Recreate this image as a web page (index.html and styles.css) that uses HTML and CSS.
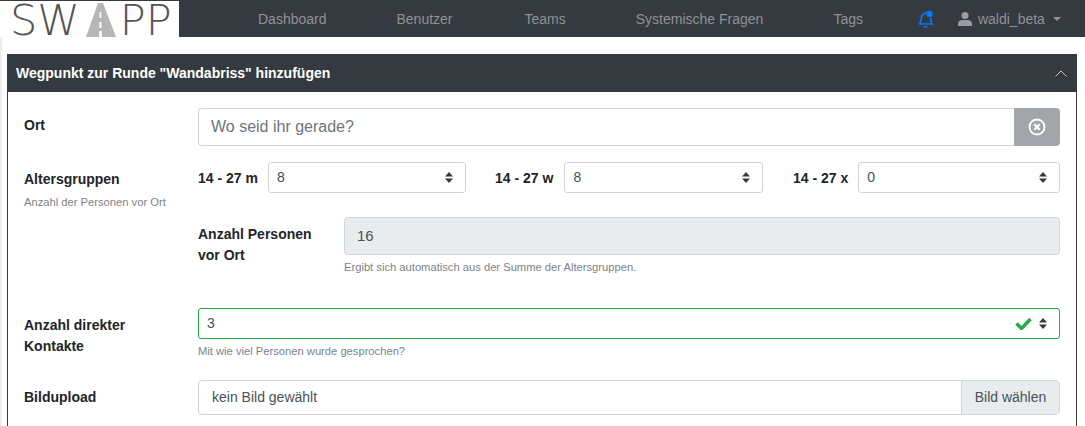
FILE: index.html
```html
<!DOCTYPE html>
<html lang="de">
<head>
    <meta charset="UTF-8">
    <title>SWAPP</title>
    <link rel="stylesheet" href="styles.css">
</head>
<body>
<nav class="navbar">
    <div class="logo">
        <span class="logo-text">SW</span>
        <svg class="logo-road" width="32" height="35" viewBox="0 0 32 35">
            <polygon points="13,1 18,1 31,35 1,35" fill="#b4b6b8"/>
            <rect x="14.6" y="10" width="1.600" height="6" fill="#fff"/>
            <rect x="14.400" y="20" width="2" height="6" fill="#fff"/>
            <rect x="14.200" y="29" width="2.600" height="6" fill="#fff"/>
        </svg>
        <span class="logo-text logo-text-pp">PP</span>
    </div>
    <div class="nav-links">
        <a class="nav-link link-dashboard">Dashboard</a>
        <a class="nav-link link-benutzer">Benutzer</a>
        <a class="nav-link link-teams">Teams</a>
        <a class="nav-link link-fragen">Systemische Fragen</a>
        <a class="nav-link link-tags">Tags</a>
    </div>
    <svg class="bell" width="16" height="18" viewBox="0 0 16 18">
        <path d="M1 14c1.500-1 2-2.500 2.300-5.500C3.700 5 5.500 3 8.500 2.500M1 14h13c-.8-.7-1-1.500-1-3V8" fill="none" stroke="#007bff" stroke-width="1.700"/>
        <circle cx="11.500" cy="4" r="3.200" fill="#007bff"/>
        <path d="M5.500 16.800h4" stroke="#007bff" stroke-width="1.500"/>
    </svg>
    <div class="user-menu">
        <svg width="14" height="14" viewBox="0 0 14 14">
            <circle cx="7" cy="3.500" r="3.500" fill="#9a9da0"/>
            <path d="M0 14v-2c0-2.500 2-4 4-4h6c2 0 4 1.500 4 4v2z" fill="#9a9da0"/>
        </svg>
        <span>waldi_beta</span>
        <span class="caret"></span>
    </div>
</nav>

<main class="page">
    <section class="card">
        <header class="card-header">
            <h1>Wegpunkt zur Runde "Wandabriss" hinzufügen</h1>
            <svg width="12" height="7" viewBox="0 0 12 7">
                <path d="M.5 6.500L6 1l5.500 5.500" fill="none" stroke="#c8cacc" stroke-width="1"/>
            </svg>
        </header>
        <div class="card-body">
            <div class="row row-ort">
                <div class="label"><b>Ort</b></div>
                <div class="input-group">
                    <div class="input input-lg">Wo seid ihr gerade?</div>
                    <div class="clear-btn">
                        <svg width="18" height="18" viewBox="0 0 18 18">
                            <circle cx="9" cy="9" r="7.500" fill="none" stroke="#fff" stroke-width="1.800"/>
                            <path d="M6.300 6.300l5.400 5.400M11.700 6.300l-5.400 5.400" stroke="#fff" stroke-width="2.200"/>
                        </svg>
                    </div>
                </div>
            </div>

            <div class="row row-alter">
                <div class="label">
                    <b>Altersgruppen</b>
                    <small>Anzahl der Personen vor Ort</small>
                </div>
                <div class="field">
                    <div class="age-groups">
                        <div class="age age-m">
                            <b>14 - 27 m</b>
                            <div class="select"><span>8</span><svg class="updown" width="8" height="11" viewBox="0 0 8 11"><path d="M4 0l4 4.400H0zM4 11L0 6.600h8z" fill="#343a40"/></svg></div>
                        </div>
                        <div class="age age-w">
                            <b>14 - 27 w</b>
                            <div class="select"><span>8</span><svg class="updown" width="8" height="11" viewBox="0 0 8 11"><path d="M4 0l4 4.400H0zM4 11L0 6.600h8z" fill="#343a40"/></svg></div>
                        </div>
                        <div class="age age-x">
                            <b>14 - 27 x</b>
                            <div class="select"><span>0</span><svg class="updown" width="8" height="11" viewBox="0 0 8 11"><path d="M4 0l4 4.400H0zM4 11L0 6.600h8z" fill="#343a40"/></svg></div>
                        </div>
                    </div>
                    <div class="sum">
                        <b class="sum-label">Anzahl Personen vor Ort</b>
                        <div class="sum-field">
                            <div class="input input-readonly">16</div>
                            <small>Ergibt sich automatisch aus der Summe der Altersgruppen.</small>
                        </div>
                    </div>
                </div>
            </div>

            <div class="row row-kontakte">
                <div class="label"><b>Anzahl direkter Kontakte</b></div>
                <div class="field">
                    <div class="select select-valid">
                        <span>3</span>
                        <svg width="17" height="13" viewBox="0 0 17 13"><path d="M1.500 6.500l5 5L15.500 2" fill="none" stroke="#28a745" stroke-width="3.400"/></svg>
                        <svg class="updown" width="8" height="11" viewBox="0 0 8 11"><path d="M4 0l4 4.400H0zM4 11L0 6.600h8z" fill="#343a40"/></svg>
                    </div>
                    <small>Mit wie viel Personen wurde gesprochen?</small>
                </div>
            </div>

            <div class="row row-upload">
                <div class="label"><b>Bildupload</b></div>
                <div class="input-group file-group">
                    <div class="file-name">kein Bild gewählt</div>
                    <div class="file-btn">Bild wählen</div>
                </div>
            </div>
        </div>
    </section>
</main>
</body>
</html>
```

FILE: styles.css
```css
* {
    box-sizing: border-box;
}
html, body {
    height: 100%;
    overflow: hidden;
}
body {
    margin: 0;
    font-family: "Liberation Sans", Arial, sans-serif;
    font-size: 14px;
    line-height: 21px;
    color: #212529;
    background: linear-gradient(to right, #e6e6e6, #fff 3px);
}
b {
    font-weight: 700;
}
small {
    display: block;
    font-size: 11.200px;
    line-height: 16px;
    color: #7b838a;
}

/* navbar */
.navbar {
    display: flex;
    align-items: flex-start;
    height: 37px;
    line-height: 38px;
    background-color: #343a40;
    color: #9a9da0;
}
.logo {
    display: flex;
    align-items: flex-end;
    flex: none;
    width: 179px;
    height: 36px;
    margin-top: 1px;
    padding-left: 10px;
    background-color: #fff;
}
.logo-text {
    font-family: "DejaVu Sans", sans-serif;
    font-weight: 200;
    font-size: 43px;
    line-height: 34px;
    color: #555;
}
.logo-road {
    flex: none;
    margin: 0 3px 0 5px;
}
.nav-links {
    display: flex;
    margin-left: 79px;
}
.nav-link {
    color: #8f9296;
}
.link-benutzer { margin-left: 70px; }
.link-teams { margin-left: 72px; }
.link-fragen { margin-left: 70px; }
.link-tags { margin-left: 70px; }
.bell {
    margin: 10px 0 0 55px;
}
.user-menu {
    display: flex;
    align-items: center;
    margin-left: 24px;
    color: #8f9296;
}
.user-menu svg {
    margin-right: 6px;
}
.caret {
    width: 0;
    height: 0;
    margin-left: 8px;
    border-top: 4px solid #8f9296;
    border-left: 4px solid transparent;
    border-right: 4px solid transparent;
}

/* card */
.page {
    padding: 17px 8px 0 7px;
}
.card {
    border: 1px solid #343a40;
    border-top: 0;
    border-bottom: 0;
}
.card-header {
    display: flex;
    align-items: center;
    justify-content: space-between;
    height: 38px;
    padding: 0 9px 0 8px;
    background-color: #343a40;
}
.card-header h1 {
    margin: 0;
    font-size: 14px;
    font-weight: 700;
    color: #fff;
}
.card-body {
    padding: 16px 16px 11px;
}

/* rows */
.row {
    display: flex;
}
.label {
    flex: none;
    width: 174px;
    padding-top: 7px;
    padding-right: 30px;
}
.row-alter {
    margin-top: 16px;
}
.row-alter .label small {
    margin-top: 4px;
}
.row-kontakte {
    margin-top: 33px;
}
.row-kontakte small {
    margin-top: 4px;
}
.row-upload {
    margin-top: 21px;
}
.field {
    flex: 1;
    min-width: 0;
}

/* inputs */
.input-group {
    display: flex;
    flex: 1;
}
.input {
    flex: 1;
    height: 38px;
    padding: 0 12px;
    border: 1px solid #ced4da;
    line-height: 36px;
}
.input-lg {
    font-size: 16px;
    color: #6c757d;
    border-right: 0;
    border-radius: 4px 0 0 4px;
}
.clear-btn {
    display: flex;
    align-items: center;
    justify-content: center;
    width: 46px;
    height: 38px;
    background-color: #a2a6ab;
    border-radius: 0 4px 4px 0;
}
.select {
    display: flex;
    align-items: center;
    height: 31px;
    padding: 0 12px 0 8px;
    border: 1px solid #ced4da;
    border-radius: 3px;
    color: #495057;
}
.select span {
    flex: 1;
    margin-top: -1px;
}
.age-groups {
    display: flex;
}
.age {
    display: flex;
    gap: 10px;
}
.age b {
    padding-top: 6px;
}
.age .select {
    flex: 1;
}
.age-m { width: 268px; }
.age-w { width: 268px; margin-left: 29px; gap: 11px; }
.age-x { flex: 1; margin-left: 30px; }
.sum {
    display: flex;
    margin-top: 24px;
}
.sum-label {
    flex: none;
    width: 146px;
    padding-top: 7px;
    padding-right: 20px;
}
.sum-field {
    flex: 1;
}
.input-readonly {
    color: #495057;
    font-size: 15px;
    background-color: #e9ecef;
    border-radius: 4px;
}
.sum-field small {
    margin-top: 4px;
}
.select-valid {
    border-color: #28a745;
}
.select-valid svg:first-of-type {
    margin-right: 7px;
}
.file-group {
    height: 35px;
    border: 1px solid #ced4da;
    border-radius: 4px;
    line-height: 33px;
    color: #495057;
}
.file-name {
    flex: 1;
    padding-left: 13px;
}
.file-btn {
    width: 98px;
    text-align: center;
    background-color: #e9ecef;
    border-left: 1px solid #ced4da;
}
```
